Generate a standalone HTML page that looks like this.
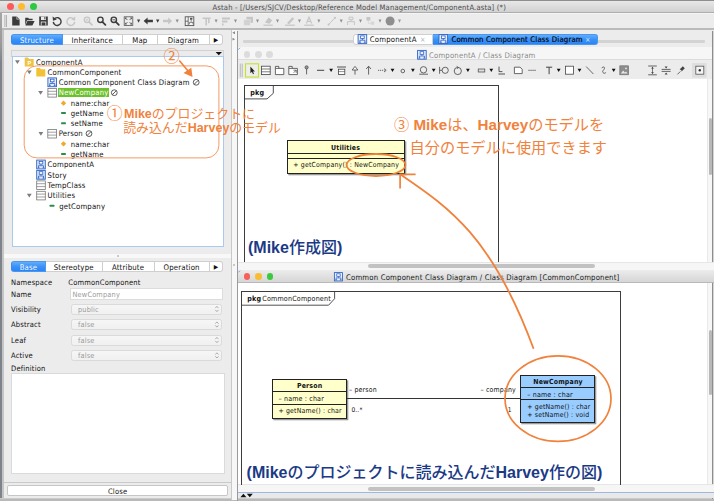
<!DOCTYPE html>
<html><head><meta charset="utf-8"><title>Astah</title>
<style>
*{box-sizing:border-box;margin:0;padding:0}
html,body{width:714px;height:501px;overflow:hidden;background:#ececec}
body{position:relative;font-family:"DejaVu Sans Condensed","Liberation Sans",sans-serif;font-size:8px;color:#111}
.a{position:absolute}
.t{position:absolute;white-space:nowrap}
.u{font-family:"DejaVu Sans Condensed","Liberation Sans",sans-serif;letter-spacing:0.17px}
.j{font-family:"Liberation Sans","Noto Sans CJK JP",sans-serif}
.j b{font-weight:bold}
.dot{position:absolute;border-radius:50%}
.tab{position:absolute;background:#fff;border:1px solid #cfcfcf;border-left:none;text-align:center;font-size:7.75px;letter-spacing:.17px;line-height:11.6px;height:11.6px}
.sel{background:linear-gradient(#62adfa,#3a92f7 50%,#2a84f5);color:#f4f8ff;border-color:#4a96f0}
.cls{position:absolute;border:1px solid #222;box-shadow:1.3px 1.3px 0 #9a9a9a}
.dd{position:absolute;left:70.5px;width:151.5px;height:11px;background:linear-gradient(#f6f6f6,#f0f0f0);border:1px solid #dadada;border-radius:2.5px}
svg{position:absolute;left:0;top:0}
</style></head><body>

<div class="a" style="left:0px;top:0px;width:714px;height:12.6px;background:linear-gradient(#e8e8e8,#d1d1d1);border-bottom:0.8px solid #adadad;border-top:0.9px solid #8e8e8e"></div>
<div class="a" style="left:0px;top:12.6px;width:714px;height:1px;background:#f5f5f5"></div>
<div class="dot" style="left:6.5px;top:3.2px;width:7px;height:7px;background:#fc5b57"></div>
<div class="dot" style="left:18.0px;top:3.2px;width:7px;height:7px;background:#fdbb2d"></div>
<div class="dot" style="left:29.5px;top:3.2px;width:7px;height:7px;background:#2bc840"></div>
<div class="t u" style="top:1.60px;font-size:7.56px;line-height:12px;color:#4c4c4c;left:212.5px;">Astah - [/Users/SJCV/Desktop/Reference Model Management/ComponentA.asta] (*)</div>
<div class="a" style="left:0px;top:13.6px;width:714px;height:15px;background:#ececec"></div>
<div class="a" style="left:0px;top:28.3px;width:714px;height:1.8px;background:linear-gradient(#c6c6c6,#adadad 50%,#c8c8c8)"></div>
<div class="a" style="left:0px;top:13px;width:1.9px;height:488px;background:linear-gradient(#a6a6a6,#9a9a9a 30px,#7d828b 50px)"></div>
<div class="a" style="left:2px;top:30px;width:1.6px;height:471px;background:#c4c4c4"></div>
<div class="a" style="left:0px;top:498.4px;width:714px;height:2.6px;background:linear-gradient(#d4d4d4,#b9b9b9 50%)"></div>
<div class="tab sel" style="left:11px;top:33.8px;width:51.9px;border-left:1px solid #cfcfcf;border-radius:3px 0 0 3px;border-left:1px solid #3c8be8;">Structure</div>
<div class="tab" style="left:62.9px;top:33.8px;width:59.800000000000004px;">Inheritance</div>
<div class="tab" style="left:122.7px;top:33.8px;width:35.3px;">Map</div>
<div class="tab" style="left:158px;top:33.8px;width:51.599999999999994px;">Diagram</div>
<div class="tab" style="left:209.6px;top:33.8px;width:13.800000000000011px;border-radius:0 3px 3px 0;font-size:6.4px;letter-spacing:0;">▶</div>
<div class="a" style="left:11.4px;top:50.4px;width:213px;height:6.2px;background:#ebebeb;border:0.8px solid #d2d2d2;border-bottom:none"></div>
<div class="a" style="left:11.8px;top:56.4px;width:212.4px;height:190.4px;background:#fff;border:1px solid #a9c9f1"></div>
<div class="a" style="left:231.4px;top:30.3px;width:6px;height:470px;background:#f7f7f7"></div>
<div class="a" style="left:231.4px;top:30.3px;width:0.8px;height:470px;background:#c9c9c9"></div>
<div class="dot" style="left:233px;top:264px;width:2.2px;height:2.2px;border:0.5px solid #aaa"></div>
<div class="a" style="left:237.2px;top:31px;width:1px;height:470px;background:#9a9a9a"></div>
<div class="t u" style="top:56.70px;font-size:7.69px;line-height:12px;color:#111;left:36px;">ComponentA</div>
<div class="t u" style="top:66.90px;font-size:7.69px;line-height:12px;color:#111;left:47.6px;">CommonComponent</div>
<div class="t u" style="top:77.00px;font-size:7.69px;line-height:12px;color:#111;left:58.8px;">Common Component Class Diagram</div>
<div class="a" style="left:57.8px;top:88.3px;width:51.6px;height:8.4px;background:#6cc02c"></div>
<div class="t u" style="top:87.40px;font-size:7.69px;line-height:12px;color:#fff;left:58.8px;">NewCompany</div>
<div class="t u" style="top:97.90px;font-size:7.69px;line-height:12px;color:#111;left:70.7px;">name:char</div>
<div class="t u" style="top:107.90px;font-size:7.69px;line-height:12px;color:#111;left:70.7px;">getName</div>
<div class="t u" style="top:118.10px;font-size:7.69px;line-height:12px;color:#111;left:70.7px;">setName</div>
<div class="t u" style="top:128.30px;font-size:7.69px;line-height:12px;color:#111;left:58.7px;">Person</div>
<div class="t u" style="top:138.50px;font-size:7.69px;line-height:12px;color:#111;left:70.7px;">name:char</div>
<div class="t u" style="top:148.90px;font-size:7.69px;line-height:12px;color:#111;left:70.7px;">getName</div>
<div class="t u" style="top:159.20px;font-size:7.69px;line-height:12px;color:#111;left:47.6px;">ComponentA</div>
<div class="t u" style="top:169.50px;font-size:7.69px;line-height:12px;color:#111;left:47.6px;">Story</div>
<div class="t u" style="top:179.80px;font-size:7.69px;line-height:12px;color:#111;left:47.6px;">TempClass</div>
<div class="t u" style="top:190.20px;font-size:7.69px;line-height:12px;color:#111;left:47.6px;">Utilities</div>
<div class="t u" style="top:200.70px;font-size:7.69px;line-height:12px;color:#111;left:59.2px;">getCompany</div>
<div class="a" style="left:3.6px;top:253.6px;width:227px;height:4.6px;background:#f8f8f8"></div>
<div class="dot" style="left:116.6px;top:254.6px;width:2px;height:2px;border:0.5px solid #aaa"></div>
<div class="tab sel" style="left:11px;top:260.6px;width:35px;border-left:1px solid #cfcfcf;border-radius:3px 0 0 3px;border-left:1px solid #3c8be8;">Base</div>
<div class="tab" style="left:46px;top:260.6px;width:56.5px;">Stereotype</div>
<div class="tab" style="left:102.5px;top:260.6px;width:52.099999999999994px;">Attribute</div>
<div class="tab" style="left:154.6px;top:260.6px;width:55.0px;">Operation</div>
<div class="tab" style="left:209.6px;top:260.6px;width:13.800000000000011px;border-radius:0 3px 3px 0;font-size:6.4px;letter-spacing:0;">▶</div>
<div class="t u" style="top:276.50px;font-size:7.53px;line-height:12px;color:#111;left:11px;">Namespace</div>
<div class="t u" style="top:276.50px;font-size:7.53px;line-height:12px;color:#111;left:68.3px;">CommonComponent</div>
<div class="t u" style="top:288.90px;font-size:7.53px;line-height:12px;color:#111;left:11px;">Name</div>
<div class="a" style="left:70px;top:288.2px;width:152.5px;height:11.4px;background:#fff;border:1px solid #dcdcdc"></div>
<div class="t u" style="top:288.90px;font-size:7.33px;line-height:12px;color:#9a9a9a;left:72.5px;">NewCompany</div>
<div class="t u" style="top:303.70px;font-size:7.53px;line-height:12px;color:#111;left:11px;">Visibility</div>
<div class="dd" style="top:303.5px"></div>
<div class="t u" style="top:303.70px;font-size:7.33px;line-height:12px;color:#9a9a9a;left:78px;">public</div>
<div class="t u" style="top:319.20px;font-size:7.53px;line-height:12px;color:#111;left:11px;">Abstract</div>
<div class="dd" style="top:319.0px"></div>
<div class="t u" style="top:319.20px;font-size:7.33px;line-height:12px;color:#9a9a9a;left:78px;">false</div>
<div class="t u" style="top:334.70px;font-size:7.53px;line-height:12px;color:#111;left:11px;">Leaf</div>
<div class="dd" style="top:334.5px"></div>
<div class="t u" style="top:334.70px;font-size:7.33px;line-height:12px;color:#9a9a9a;left:78px;">false</div>
<div class="t u" style="top:350.10px;font-size:7.53px;line-height:12px;color:#111;left:11px;">Active</div>
<div class="dd" style="top:349.9px"></div>
<div class="t u" style="top:350.10px;font-size:7.33px;line-height:12px;color:#9a9a9a;left:78px;">false</div>
<div class="t u" style="top:363.20px;font-size:7.53px;line-height:12px;color:#111;left:11px;">Definition</div>
<div class="a" style="left:11px;top:373px;width:213.5px;height:100.6px;background:#fff;border:1.6px solid #dadada"></div>
<div class="a" style="left:3.6px;top:482.3px;width:228px;height:1px;background:#c9c9c9"></div>
<div class="a" style="left:7.4px;top:485.2px;width:220.6px;height:11px;background:#fff;border:1px solid #c6c6c6;border-radius:2px"></div>
<div class="t u" style="top:485.70px;font-size:7.53px;line-height:12px;color:#111;left:-32.400000000000006px;width:300px;text-align:center;">Close</div>
<div class="a" style="left:243px;top:40px;width:461.6px;height:2.6px;background:#d3d3d3;border-radius:1px"></div>
<div class="tab" style="left:352.6px;top:33.6px;height:11.8px;width:80.4px;border-left:1px solid #cfcfcf;border-radius:3px 0 0 3px"></div>
<div class="tab sel" style="left:433px;top:33.6px;width:164.6px;height:11.8px;border-radius:0 3px 3px 0"></div>
<div class="t u" style="top:34.30px;font-size:7.72px;line-height:12px;color:#111;left:369.8px;">ComponentA</div>
<div class="t u" style="top:34.10px;font-size:7.24px;line-height:12px;color:#b5b5b5;left:420px;">×</div>
<div class="t u" style="top:34.30px;font-size:7.72px;line-height:12px;color:#10203a;left:451.4px;text-shadow:0 0 .3px #10203a;">Common Component Class Diagram</div>
<div class="t u" style="top:34.10px;font-size:7.24px;line-height:12px;color:#cfe3fb;left:585px;">×</div>
<div class="a" style="left:238.2px;top:47px;width:475.8px;height:13.4px;background:#f6f6f6;border-bottom:1px solid #dcdcdc"></div>
<div class="dot" style="left:243.5px;top:51.2px;width:6.8px;height:6.8px;background:#dcdcdc"></div>
<div class="dot" style="left:254.9px;top:51.2px;width:6.8px;height:6.8px;background:#dcdcdc"></div>
<div class="dot" style="left:266.20000000000005px;top:51.2px;width:6.8px;height:6.8px;background:#dcdcdc"></div>
<div class="t u" style="top:49.50px;font-size:7.72px;line-height:12px;color:#8a8a8a;left:429px;">ComponentA / Class Diagram</div>
<div class="a" style="left:238.2px;top:60.4px;width:475.8px;height:18.6px;background:#ececec"></div>
<div class="a" style="left:238.2px;top:79px;width:468.8px;height:183px;background:#fff"></div>
<div class="a" style="left:707px;top:79px;width:5.4px;height:183px;background:#f7f7f7;border-left:1px solid #e9e9e9"></div>
<div class="a" style="left:708.6px;top:118px;width:3px;height:57px;background:#b9b9b9;border-radius:1.5px"></div>
<div class="a" style="left:712.2px;top:31px;width:1px;height:468px;background:#8e8e8e"></div>
<div class="a" style="left:713.2px;top:31px;width:0.8px;height:468px;background:#d4d4d4"></div>
<div class="a" style="left:238.2px;top:262px;width:475.8px;height:8px;background:#f6f6f6;border-top:1px solid #e6e6e6"></div>
<div class="a" style="left:367.8px;top:264.2px;width:227px;height:4px;background:#c2c2c2;border-radius:2px"></div>
<div class="a" style="left:244px;top:85px;width:254.9px;height:177px;border:1px solid #3c3c3c;border-bottom:none"></div>
<div class="t u" style="top:86.70px;font-size:7.14px;line-height:12px;color:#111;font-weight:bold;left:250.3px;">pkg</div>
<div class="cls" style="left:286.5px;top:140.2px;width:118px;height:34.3px;background:#ffffcc"></div>
<div class="a" style="left:287px;top:153px;width:117.4px;height:0.9px;background:#222"></div>
<div class="a" style="left:287px;top:157.9px;width:117.4px;height:0.9px;background:#222"></div>
<div class="t u" style="top:142.20px;font-size:6.95px;line-height:12px;color:#111;font-weight:bold;left:195.60000000000002px;width:300px;text-align:center;">Utilities</div>
<div class="t u" style="top:159.00px;font-size:6.93px;line-height:12px;color:#111;left:293.3px;">+ getCompany() : NewCompany</div>
<div class="t j" style="top:237.60px;font-size:16px;line-height:20px;color:#1b3a86;left:248px;font-weight:500;"><b>(Mike</b>作成図<b>)</b></div>
<div class="a" style="left:238.2px;top:270px;width:475.8px;height:13.2px;background:linear-gradient(#ececec,#d6d6d6);border-bottom:1px solid #b9b9b9"></div>
<div class="dot" style="left:243.7px;top:273.4px;width:6.6px;height:6.6px;background:#f7605a"></div>
<div class="dot" style="left:255.2px;top:273.4px;width:6.6px;height:6.6px;background:#f9bd34"></div>
<div class="dot" style="left:266.59999999999997px;top:273.4px;width:6.6px;height:6.6px;background:#3dc93f"></div>
<div class="t u" style="top:271.50px;font-size:7.72px;line-height:12px;color:#1a1a1a;left:346px;">Common Component Class Diagram / Class Diagram [CommonComponent]</div>
<div class="a" style="left:238.2px;top:283.2px;width:468.8px;height:200.6px;background:#fff"></div>
<div class="a" style="left:707px;top:283.2px;width:5.4px;height:200.6px;background:#f7f7f7;border-left:1px solid #e9e9e9"></div>
<div class="a" style="left:708.6px;top:330px;width:3px;height:65px;background:#b9b9b9;border-radius:1.5px"></div>
<div class="a" style="left:238.2px;top:483.8px;width:475.8px;height:8px;background:#f6f6f6;border-top:1px solid #e6e6e6"></div>
<div class="a" style="left:367.6px;top:486.5px;width:227.4px;height:4.2px;background:#c2c2c2;border-radius:2px"></div>
<div class="a" style="left:238.2px;top:492px;width:475.8px;height:0.9px;background:#9db7dd"></div>
<div class="a" style="left:238.2px;top:492.9px;width:475.8px;height:5.5px;background:#e9e9e9"></div>
<div class="a" style="left:241.3px;top:290.5px;width:379.8px;height:194px;border:1px solid #3c3c3c;border-bottom:none"></div>
<div class="t u" style="top:292.90px;font-size:7.14px;line-height:12px;color:#111;left:247.3px;word-spacing:-1.2px;"><b>pkg</b> CommonComponent</div>
<div class="cls" style="left:272px;top:378.6px;width:75.1px;height:40.1px;background:#ffffcc"></div>
<div class="a" style="left:272.1px;top:390.9px;width:74.9px;height:0.9px;background:#222"></div>
<div class="a" style="left:272.1px;top:403.6px;width:74.9px;height:0.9px;background:#222"></div>
<div class="t u" style="top:379.90px;font-size:6.95px;line-height:12px;color:#111;font-weight:bold;left:159.60000000000002px;width:300px;text-align:center;">Person</div>
<div class="t u" style="top:392.70px;font-size:7.04px;line-height:12px;color:#111;left:278.5px;">– name : char</div>
<div class="t u" style="top:405.30px;font-size:6.9px;line-height:12px;color:#111;left:278.5px;">+ getName() : char</div>
<div class="t u" style="top:383.70px;font-size:6.95px;line-height:12px;color:#111;left:349px;">– person</div>
<div class="t u" style="top:404.00px;font-size:6.56px;line-height:12px;color:#111;left:351.4px;">0..*</div>
<div class="a" style="left:347.1px;top:398.1px;width:172.5px;height:0.9px;background:#333"></div>
<div class="cls" style="left:519.6px;top:374.5px;width:75.7px;height:48px;background:#99ccff"></div>
<div class="a" style="left:519.7px;top:386.9px;width:75.5px;height:0.9px;background:#222"></div>
<div class="a" style="left:519.7px;top:399.4px;width:75.5px;height:0.9px;background:#222"></div>
<div class="t u" style="top:375.90px;font-size:6.95px;line-height:12px;color:#111;font-weight:bold;left:408px;width:300px;text-align:center;">NewCompany</div>
<div class="t u" style="top:388.70px;font-size:7.04px;line-height:12px;color:#111;left:527.3px;">– name : char</div>
<div class="t u" style="top:401.00px;font-size:6.9px;line-height:12px;color:#111;left:527.3px;">+ getName() : char</div>
<div class="t u" style="top:409.30px;font-size:6.9px;line-height:12px;color:#111;left:527.3px;">+ setName() : void</div>
<div class="t u" style="top:384.10px;font-size:6.95px;line-height:12px;color:#111;left:215.89999999999998px;width:300px;text-align:right;">– company</div>
<div class="t u" style="top:403.70px;font-size:6.56px;line-height:12px;color:#111;left:359.7px;width:300px;text-align:center;">1</div>
<div class="t j" style="top:462.50px;font-size:16px;line-height:20px;color:#1b3a86;left:246.6px;font-weight:500;"><b>(Mike</b>のプロジェクトに読み込んだ<b>Harvey</b>作の図<b>)</b></div>
<div class="t j" style="top:114.60px;font-size:15.2px;line-height:20px;color:#f0823c;left:394px;">③ <b>Mike</b>は、<b>Harvey</b>のモデルを</div>
<div class="t j" style="top:138.40px;font-size:15.2px;line-height:20px;color:#f0823c;left:409.6px;">自分のモデルに使用できます</div>
<div class="t j" style="top:106.30px;font-size:12.9px;line-height:16px;color:#f0823c;left:124px;"><b style="font-size:12.5px">Mike</b>のプロジェクトに</div>
<div class="t j" style="top:120.30px;font-size:12.9px;line-height:16px;color:#f0823c;left:123.2px;">読み込んだ<b style="font-size:12.5px">Harvey</b>のモデル</div>
<div class="t j" style="top:104.60px;font-size:15.8px;line-height:18px;color:#f0823c;left:-35.3px;width:300px;text-align:center;">①</div>
<div class="t j" style="top:46.70px;font-size:16.2px;line-height:18px;color:#f0823c;left:21.5px;width:300px;text-align:center;">②</div>
<svg width="714" height="501" viewBox="0 0 714 501"><path d="M14.999999999999998 60.3h4.8l-2.4 3.8z" fill="#7d7d7d"/><path d="M24.7 57.6h3.4l1 1.4h4.6v7.4h-9z" fill="#efc443"/><text x="27.599999999999998" y="64.9" font-size="5.6" font-weight="bold" fill="#fff" font-family="Liberation Sans,sans-serif">P</text><path d="M26.900000000000002 70.5h4.8l-2.4 3.8z" fill="#7d7d7d"/><path d="M36.3 68.0h3.6l1 1.2h4.4v7.4h-9z" fill="#f3c136"/><rect x="47.9" y="77.89999999999999" width="8.6" height="8.8" fill="#dfe9fa" stroke="#2d62c4" stroke-width="0.9"/><rect x="50.4" y="79.2" width="3.6" height="2.6" fill="#fff" stroke="#2d62c4" stroke-width="0.8"/><path d="M52.2 81.8v1.5M49.7 85.7v-2.2h5v2.2M48.9 85.6h1.8M53.7 85.6h1.8" fill="none" stroke="#2d62c4" stroke-width="0.8"/><path d="M38.2 91.0h4.8l-2.4 3.8z" fill="#7d7d7d"/><rect x="47.9" y="88.5" width="8.6" height="8.6" fill="#fff" stroke="#777" stroke-width="0.8"/><path d="M47.9 91.3h8.6M47.9 94.2h8.6" stroke="#777" stroke-width="0.7"/><path d="M63.5 100.60000000000001l2.7 2.6l-2.7 2.6l-2.7 -2.6z" fill="#f2a72e"/><rect x="61.1" y="112.0" width="4.8" height="2" rx=".5" fill="#2b8d4c"/><rect x="61.1" y="122.2" width="4.8" height="2" rx=".5" fill="#2b8d4c"/><path d="M38.5 131.9h4.8l-2.4 3.8z" fill="#7d7d7d"/><rect x="47.800000000000004" y="129.4" width="8.6" height="8.6" fill="#fff" stroke="#777" stroke-width="0.8"/><path d="M47.800000000000004 132.2h8.6M47.800000000000004 135.1h8.6" stroke="#777" stroke-width="0.7"/><path d="M63.5 141.20000000000002l2.7 2.6l-2.7 2.6l-2.7 -2.6z" fill="#f2a72e"/><rect x="61.1" y="153.0" width="4.8" height="2" rx=".5" fill="#2b8d4c"/><rect x="36.699999999999996" y="160.1" width="8.6" height="8.8" fill="#dfe9fa" stroke="#2d62c4" stroke-width="0.9"/><rect x="39.199999999999996" y="161.4" width="3.6" height="2.6" fill="#fff" stroke="#2d62c4" stroke-width="0.8"/><path d="M41.0 164.0v1.5M38.5 167.9v-2.2h5v2.2M37.699999999999996 167.8h1.8M42.5 167.8h1.8" fill="none" stroke="#2d62c4" stroke-width="0.8"/><rect x="36.699999999999996" y="170.4" width="8.6" height="8.8" fill="#dfe9fa" stroke="#2d62c4" stroke-width="0.9"/><rect x="39.199999999999996" y="171.70000000000002" width="3.6" height="2.6" fill="#fff" stroke="#2d62c4" stroke-width="0.8"/><path d="M41.0 174.3v1.5M38.5 178.20000000000002v-2.2h5v2.2M37.699999999999996 178.10000000000002h1.8M42.5 178.10000000000002h1.8" fill="none" stroke="#2d62c4" stroke-width="0.8"/><rect x="36.699999999999996" y="180.9" width="8.6" height="8.6" fill="#fff" stroke="#777" stroke-width="0.8"/><path d="M36.699999999999996 183.7h8.6M36.699999999999996 186.6h8.6" stroke="#777" stroke-width="0.7"/><path d="M26.900000000000002 193.8h4.8l-2.4 3.8z" fill="#7d7d7d"/><rect x="36.699999999999996" y="191.3" width="8.6" height="8.6" fill="#fff" stroke="#777" stroke-width="0.8"/><path d="M36.699999999999996 194.1h8.6M36.699999999999996 197.0h8.6" stroke="#777" stroke-width="0.7"/><rect x="49.6" y="204.8" width="4.8" height="2" rx=".5" fill="#2b8d4c"/><circle cx="196.2" cy="82.3" r="2.9" fill="none" stroke="#333" stroke-width="0.8"/><path d="M194.2 84.3l4 -4" stroke="#333" stroke-width="0.8"/><circle cx="114.3" cy="92.7" r="2.9" fill="none" stroke="#333" stroke-width="0.8"/><path d="M112.3 94.7l4 -4" stroke="#333" stroke-width="0.8"/><circle cx="89" cy="133.6" r="2.9" fill="none" stroke="#333" stroke-width="0.8"/><path d="M87 135.6l4 -4" stroke="#333" stroke-width="0.8"/><path d="M215.6 51.9h6.4l-3.2 3.3z" fill="#111"/><path d="M235 31.3v2.9l-2.7 -1.45zM232.5 37.7v2.9l2.7 -1.45z" fill="#8a8a8a"/><path d="M238.4 49.6l1.6 -1.8M238.4 272.4l1.6 -1.8" stroke="#5b8fe0" stroke-width=".8"/><path d="M215.3 308.1l1.6 -1.7l1.6 1.7M215.3 309.9l1.6 1.7l1.6 -1.7" fill="none" stroke="#8a8a8a" stroke-width="0.7"/><path d="M215.3 323.6l1.6 -1.7l1.6 1.7M215.3 325.4l1.6 1.7l1.6 -1.7" fill="none" stroke="#8a8a8a" stroke-width="0.7"/><path d="M215.3 339.1l1.6 -1.7l1.6 1.7M215.3 340.9l1.6 1.7l1.6 -1.7" fill="none" stroke="#8a8a8a" stroke-width="0.7"/><path d="M215.3 354.5l1.6 -1.7l1.6 1.7M215.3 356.29999999999995l1.6 1.7l1.6 -1.7" fill="none" stroke="#8a8a8a" stroke-width="0.7"/><g transform="translate(357.7 34.2) scale(1.0)"><rect x=".4" y=".4" width="8.6" height="8.8" fill="#e4edfb" stroke="#2d62c4" stroke-width="0.9"/><rect x="2.9" y="1.7" width="3.6" height="2.6" fill="#fff" stroke="#2d62c4" stroke-width="0.8"/><path d="M4.7 4.3v1.5M2.2 8.2v-2.2h5v2.2M1.4 8.1h1.8M6.2 8.1h1.8" fill="none" stroke="#2d62c4" stroke-width="0.8"/></g><g transform="translate(438.6 34.2) scale(1.0)"><rect x=".4" y=".4" width="8.6" height="8.8" fill="#e4edfb" stroke="#2d62c4" stroke-width="0.9"/><rect x="2.9" y="1.7" width="3.6" height="2.6" fill="#fff" stroke="#2d62c4" stroke-width="0.8"/><path d="M4.7 4.3v1.5M2.2 8.2v-2.2h5v2.2M1.4 8.1h1.8M6.2 8.1h1.8" fill="none" stroke="#2d62c4" stroke-width="0.8"/></g><g transform="translate(417.2 50) scale(1.0)"><rect x=".4" y=".4" width="8.6" height="8.8" fill="#e4edfb" stroke="#2d62c4" stroke-width="0.9"/><rect x="2.9" y="1.7" width="3.6" height="2.6" fill="#fff" stroke="#2d62c4" stroke-width="0.8"/><path d="M4.7 4.3v1.5M2.2 8.2v-2.2h5v2.2M1.4 8.1h1.8M6.2 8.1h1.8" fill="none" stroke="#2d62c4" stroke-width="0.8"/></g><path d="M244.5 98.9H267L273.3 93.3V85.5" fill="none" stroke="#3c3c3c" stroke-width="0.9"/><g transform="translate(334 272.2) scale(0.95)"><rect x=".4" y=".4" width="8.6" height="8.8" fill="#e4edfb" stroke="#2d62c4" stroke-width="0.9"/><rect x="2.9" y="1.7" width="3.6" height="2.6" fill="#fff" stroke="#2d62c4" stroke-width="0.8"/><path d="M4.7 4.3v1.5M2.2 8.2v-2.2h5v2.2M1.4 8.1h1.8M6.2 8.1h1.8" fill="none" stroke="#2d62c4" stroke-width="0.8"/></g><path d="M240.4 497.2l3 -3.4l3 3.4zM246.8 493.8h6l-3 3.4z" fill="#111"/><path d="M241.8 305.2H328.6L334.6 298.7V291" fill="none" stroke="#3c3c3c" stroke-width="0.9"/><path d="M4.9 15v12M6.5 15v12" stroke="#9a9a9a" stroke-width="0.7"/><path d="M12.2 16.4h4.6l2.8 2.8v6.3h-7.4z" fill="#3c3c3c"/><path d="M16.8 16.4v2.8h2.8" fill="none" stroke="#ececec" stroke-width="0.6"/><path d="M25.2 25.3v-7.6h3l.8 1h3.6v1.6h-5.6z" fill="#3c3c3c"/><path d="M25.4 25.4l2 -4.4h7.2l-2.2 4.4z" fill="#3c3c3c"/><path d="M39.2 16.6h8.6v8.8h-8.6z" fill="#3c3c3c"/><rect x="41" y="16.6" width="5" height="3.4" fill="#ececec"/><rect x="44.4" y="17" width="1" height="2.4" fill="#3c3c3c"/><rect x="40.8" y="21.6" width="5.4" height="3.8" fill="#ececec"/><rect x="41.6" y="22.4" width="3.8" height="3" fill="#3c3c3c"/><path d="M55 18.3a3.9 3.9 0 1 1 -1.7 3.6" fill="none" stroke="#3c3c3c" stroke-width="1.4"/><path d="M52.6 16.6l.4 4.2l3.8 -1.4z" fill="#3c3c3c"/><path d="M73 18.3a3.9 3.9 0 1 0 1.7 3.6" fill="none" stroke="#c6c6c6" stroke-width="1.4"/><path d="M75.4 16.6l-.4 4.2l-3.8 -1.4z" fill="#c6c6c6"/><circle cx="87.0" cy="19.8" r="2.7" fill="none" stroke="#c6c6c6" stroke-width="1.4"/><path d="M89.0 21.8l3 3" stroke="#c6c6c6" stroke-width="1.8" stroke-linecap="round"/><circle cx="100.4" cy="19.8" r="2.7" fill="none" stroke="#3c3c3c" stroke-width="1.4"/><path d="M102.4 21.8l3 3" stroke="#3c3c3c" stroke-width="1.8" stroke-linecap="round"/><circle cx="113.80000000000001" cy="19.8" r="2.7" fill="none" stroke="#3c3c3c" stroke-width="1.4"/><path d="M115.80000000000001 21.8l3 3" stroke="#3c3c3c" stroke-width="1.8" stroke-linecap="round"/><path d="M85.8 19.8h2.4M87 18.6v2.4" stroke="#c6c6c6" stroke-width=".7"/><path d="M112.4 19.8h2.8" stroke="#3c3c3c" stroke-width=".8"/><rect x="124.2" y="16.8" width="8.6" height="8.6" fill="none" stroke="#555" stroke-width="0.8"/><path d="M125.4 18l2 2M131.6 18l-2 2M125.4 24.2l2 -2M131.6 24.2l-2 -2" stroke="#555" stroke-width="0.9"/><path d="M125 17.6h2l-2 2zM132 17.6h-2l2 2zM125 24.6h2l-2 -2zM132 24.6h-2l2 -2z" fill="#555"/><path d="M137 19.5h3.1999999999999886l-1.5999999999999943 3.2z" fill="#3c3c3c"/><path d="M143.6 21.0l4 -3.4v2.1h5.3v2.6h-5.3v2.1z" fill="#3c3c3c"/><path d="M156 19.5h3.4000000000000057l-1.7000000000000028 3.2z" fill="#3c3c3c"/><path d="M172.2 21.0l-4 -3.4v2.1h-5.2v2.6h5.2v2.1z" fill="#c6c6c6"/><path d="M175.6 19.5h3.200000000000017l-1.6000000000000085 3.2z" fill="#8f8f8f"/><rect x="185.2" y="16.8" width="8.6" height="8.8" fill="#f4f4f4" stroke="#555" stroke-width="0.9"/><path d="M188.2 16.8v8.8M185.2 21.2h3" stroke="#555" stroke-width=".8"/><rect x="190" y="17.9" width="2.4" height="1.8" fill="#555"/><path d="M191.2 19.7v2M189.4 24.3v-1.9h3.6v1.9" fill="none" stroke="#555" stroke-width=".7"/><path d="M202.6 17.4h8v1.6h-8zM205.4 19v6.4h1.6v-6.4zM208 19v4.2h1.6v-4.2z" fill="#c6c6c6"/><path d="M214.6 19.5h3.0l-1.5 3.2z" fill="#8f8f8f"/><path d="M222 17.4h8v2h-8zM222 20.6h5.4v2h-5.4zM222 23.6h1.6v2h-1.6z" fill="#c6c6c6"/><path d="M234 19.5h3l-1.5 3.2z" fill="#8f8f8f"/><rect x="246.4" y="16.8" width="6.6" height="6" fill="#c6c6c6"/><rect x="243.8" y="19.6" width="6.4" height="6" fill="#d2d2d2" stroke="#ececec" stroke-width=".5"/><path d="M256 19.5h3l-1.5 3.2z" fill="#8f8f8f"/><path d="M265 22.6l3.6 -5l3.6 2.6l-2.6 3.6z" fill="#c6c6c6"/><path d="M263.4 25.2h9.4" stroke="#c6c6c6" stroke-width="1.2"/><path d="M276 19.5h3l-1.5 3.2z" fill="#8f8f8f"/><path d="M287 23l5.4 -5.8l1.8 1.6l-5.2 5.4z" fill="#c6c6c6"/><path d="M285 25.2h9.8" stroke="#c6c6c6" stroke-width="1.2"/><path d="M298 19.5h2.8999999999999773l-1.4499999999999886 3.2z" fill="#8f8f8f"/><path d="M306.4 23.4l2.6 -6.4l2.6 6.4M307.4 21.4h3.2" fill="none" stroke="#c6c6c6" stroke-width="1.2"/><path d="M304.2 25.2h9.6" stroke="#c6c6c6" stroke-width="1.2"/><path d="M317.4 19.5h2.900000000000034l-1.450000000000017 3.2z" fill="#8f8f8f"/><path d="M328.4 24.8l6.6 -7" stroke="#c6c6c6" stroke-width="1"/><circle cx="328.6" cy="24.6" r="1.1" fill="#c6c6c6"/><circle cx="335" cy="17.8" r="1.1" fill="#c6c6c6"/><path d="M339.7 19.5h3.0l-1.5 3.2z" fill="#8f8f8f"/><path d="M349 17.2h4v2.4h-4zM351 19.6v2M347.6 25v-3.4h6.8v3.4" fill="none" stroke="#c6c6c6" stroke-width="1"/><path d="M359 19.5h3l-1.5 3.2z" fill="#8f8f8f"/><rect x="366.4" y="17" width="4" height="3.6" fill="#c6c6c6"/><rect x="370.8" y="21.6" width="3.4" height="3.2" fill="#d6d6d6"/><path d="M368.4 20.6v2.8h2.4" fill="none" stroke="#d6d6d6" stroke-width=".7"/><path d="M378.6 19.5h2.7999999999999545l-1.3999999999999773 3.2z" fill="#8f8f8f"/><circle cx="390.1" cy="21.0" r="4.5" fill="#8e8e8e"/><path d="M398 19.5h3l-1.5 3.2z" fill="#9a9a9a"/><path d="M240.3 63.6v13.6M242.2 63.6v13.6" stroke="#a4a4a4" stroke-width="0.7"/><rect x="245.5" y="63.8" width="13" height="13.2" fill="#eeeeea" stroke="#c6e22c" stroke-width="1.1"/><path d="M250.4 66.6v6.6l1.5 -1.4l1.1 2.5l1 -.5l-1.1 -2.4h2z" fill="#222"/><rect x="261.4" y="66.2" width="8.8" height="8.4" fill="#fff" stroke="#444" stroke-width="0.8"/><path d="M261.4 69h8.8M261.4 71.8h8.8" stroke="#444" stroke-width=".7"/><path d="M275.4 68.4v-2h3.4v2M275.4 68.4h8.4v6.2h-8.4z" fill="#fff" stroke="#444" stroke-width="0.8"/><path d="M288.8 68.4v-2h3.4v2M288.8 68.4h8.6v6.2h-8.6z" fill="#fff" stroke="#444" stroke-width="0.8"/><path d="M293.4 70.2h2.8v2.6M296.2 70.2l-2.6 2.6" fill="none" stroke="#444" stroke-width=".7"/><circle cx="306.6" cy="67.4" r="1.6" fill="#999" stroke="#444" stroke-width=".7"/><path d="M306.6 69v5.4" stroke="#444" stroke-width=".8"/><path d="M317 70.3h7.2" stroke="#444" stroke-width="1"/><path d="M329.2 68.8h3.8000000000000114l-1.9000000000000057 3.2z" fill="#111"/><path d="M337 67h9" stroke="#444" stroke-width=".9"/><rect x="338.4" y="69.2" width="6.4" height="5.2" fill="#fff" stroke="#444" stroke-width=".8"/><path d="M338.4 71.6h6.4" stroke="#444" stroke-width=".6"/><path d="M355 74.6v-4.6M352.2 70l2.8 -3.6l2.8 3.6z" fill="#fff" stroke="#444" stroke-width=".8"/><path d="M368.6 74.6v-8.2M366.2 69l2.4 -2.8l2.4 2.8" fill="none" stroke="#444" stroke-width=".8"/><path d="M378 70.3h6.5" stroke="#444" stroke-width=".8" stroke-dasharray="1.2 .8"/><path d="M384 68.6l2.2 1.7l-2.2 1.7" fill="none" stroke="#444" stroke-width=".8"/><path d="M390.6 68.8h3.7999999999999545l-1.8999999999999773 3.2z" fill="#111"/><circle cx="402.8" cy="71" r="1.8" fill="none" stroke="#444" stroke-width=".8"/><path d="M411 68.8h3.8000000000000114l-1.9000000000000057 3.2z" fill="#111"/><circle cx="423.5" cy="69.8" r="3.2" fill="none" stroke="#444" stroke-width=".8"/><path d="M419.2 74.2h8.8" stroke="#444" stroke-width=".8"/><path d="M431.8 68.8h3.8000000000000114l-1.9000000000000057 3.2z" fill="#111"/><path d="M439.6 66.8v7M439.6 70.3h2.4" stroke="#444" stroke-width=".8"/><circle cx="445.2" cy="70.3" r="3.1" fill="none" stroke="#444" stroke-width=".8"/><circle cx="457.8" cy="71" r="3.6" fill="none" stroke="#444" stroke-width=".8"/><path d="M456.6 66.2l1.8 1.2l-1.2 1.4" fill="none" stroke="#444" stroke-width=".7"/><path d="M466 68.8h3.8000000000000114l-1.9000000000000057 3.2z" fill="#111"/><rect x="478.2" y="69" width="6.6" height="3" fill="#ddd" stroke="#444" stroke-width=".7"/><path d="M489.4 68.8h3.8000000000000114l-1.9000000000000057 3.2z" fill="#111"/><path d="M499 66.6v5h3.4M498.4 74h6.6" fill="none" stroke="#444" stroke-width=".9"/><path d="M514.4 67.2h5.6l2.2 2v4.4h-7.8z" fill="#fff" stroke="#444" stroke-width=".8"/><path d="M528.4 70.3h8" stroke="#444" stroke-width=".9" stroke-dasharray="1.3 .7"/><path d="M546 67.2h6.2M549.1 67.2v7" stroke="#444" stroke-width="1"/><path d="M556.8 68.8h3.800000000000068l-1.900000000000034 3.2z" fill="#111"/><rect x="565.4" y="66.2" width="8" height="8" fill="#fff" stroke="#444" stroke-width=".8"/><path d="M577.6 68.8h3.7999999999999545l-1.8999999999999773 3.2z" fill="#111"/><path d="M586.2 66.6l7.2 7.4" stroke="#444" stroke-width=".8"/><path d="M601.6 68.2c1.4 -2 3.4 -1.4 2.8 .4c-.5 1.6 -2.6 2.4 -1.4 4c.8 1 2 .8 3 -.2" fill="none" stroke="#444" stroke-width=".8"/><path d="M611.8 68.8h3.800000000000068l-1.900000000000034 3.2z" fill="#111"/><rect x="619.8" y="65.8" width="8.8" height="9" fill="#8c8c8c" stroke="#6a6a6a" stroke-width=".6"/><path d="M620.8 73.6l2.4 -3l1.6 1.8l1.2 -1l1.6 2.2z" fill="#e8e8e8"/><circle cx="626" cy="68.4" r=".9" fill="#e8e8e8"/><path d="M648.2 66h8.6M648.2 74.8h8.6" stroke="#444" stroke-width=".8"/><path d="M652.5 67v6.8" stroke="#444" stroke-width=".7"/><path d="M651 68.6l1.5 -1.6l1.5 1.6zM651 72.2l1.5 1.6l1.5 -1.6z" fill="#444"/><path d="M661.6 69.4h9M661.6 71.4h9" stroke="#444" stroke-width=".8"/><path d="M664.6 66.4l1.5 2l1.5 -2zM664.6 74.4l1.5 -2l1.5 2z" fill="#444"/><path d="M677.4 74.4l3 -3" stroke="#444" stroke-width=".8"/><path d="M679.6 69.4l3.2 -3.2l2 2l-3.2 3.2l-.4 -1.4z" fill="#444"/><rect x="692" y="63" width="14.6" height="14.8" rx="1" fill="#dedede"/><rect x="695.8" y="66.2" width="8" height="8" fill="#f4f4f4" stroke="#555" stroke-width=".8"/><circle cx="699.8" cy="70.2" r="1.2" fill="#333"/><rect x="24.2" y="65.9" width="194.7" height="92" rx="12.6" ry="12.6" fill="none" stroke="#f0823c" stroke-width="0.8"/><path d="M179.3 60.6L188.5 71.5" stroke="#f0823c" stroke-width="1.6" fill="none"/><path d="M192.5 76.9L183.5 72.9L191.3 67.8z" fill="#f0823c"/><ellipse cx="376" cy="165" rx="29.4" ry="11" fill="none" stroke="#f0823c" stroke-width="1.8"/><ellipse cx="558" cy="398.6" rx="53" ry="42.8" fill="none" stroke="#f0823c" stroke-width="1.7"/><path d="M400.2 174.2C447.1 206.3 491.8 235.1 533.6 348.8" fill="none" stroke="#f0823c" stroke-width="1.8"/><path d="M415.6 174.3H400.1V188.5" fill="none" stroke="#f0823c" stroke-width="1.7"/></svg>
</body></html>
